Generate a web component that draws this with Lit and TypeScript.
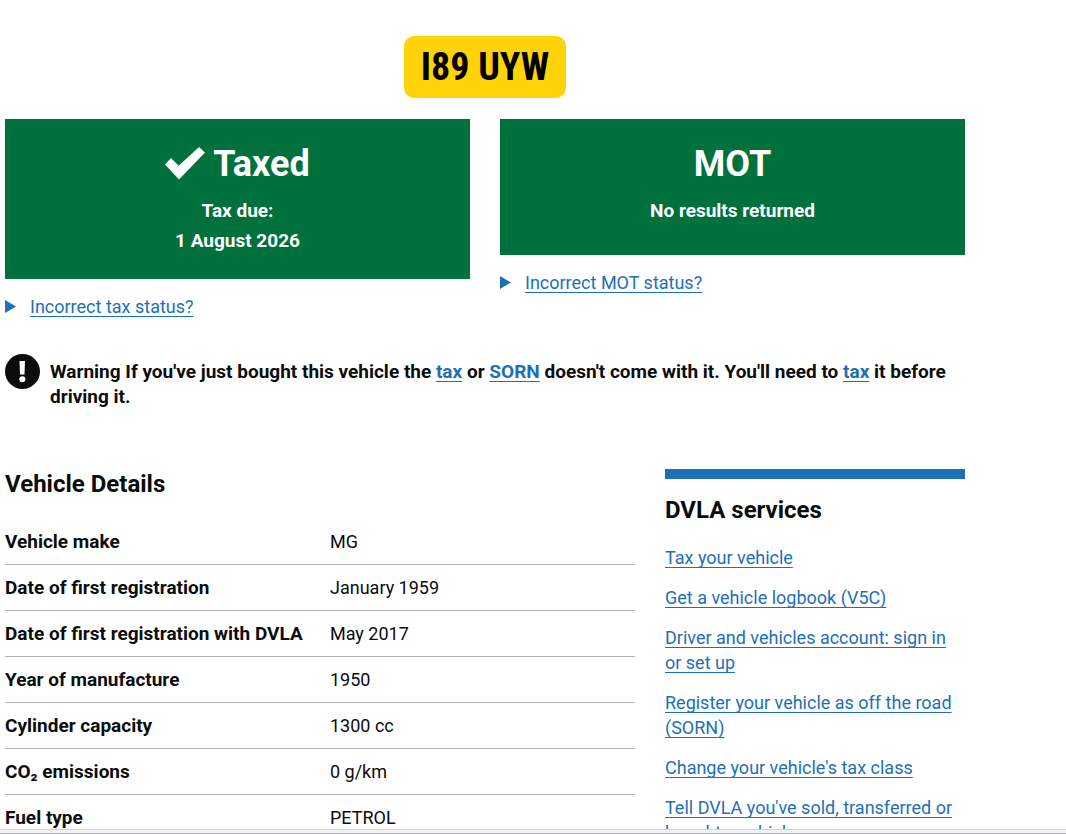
import { LitElement, html, css, svg } from "lit";
import { customElement } from "lit/decorators.js";

const VEHICLE: [string, string][] = [
  ["Vehicle make", "MG"],
  ["Date of first registration", "January 1959"],
  ["Date of first registration with DVLA", "May 2017"],
  ["Year of manufacture", "1950"],
  ["Cylinder capacity", "1300 cc"],
  ["CO₂ emissions", "0 g/km"],
  ["Fuel type", "PETROL"],
];

const SERVICES = [
  "Tax your vehicle",
  "Get a vehicle logbook (V5C)",
  "Driver and vehicles account: sign in or set up",
  "Register your vehicle as off the road (SORN)",
  "Change your vehicle's tax class",
  "Tell DVLA you've sold, transferred or bought a vehicle",
];

const tick = svg`<svg class="tick" viewBox="0 0 40 33" aria-hidden="true">
  <path fill="currentColor" d="M0 17.5 L6 11 L13.7 18.7 L34 0 L40 5.5 L14 32.5 Z"/>
</svg>`;

@customElement("app-root")
export class AppRoot extends LitElement {
  static styles = css`
    :host {
      display: flex;
      flex-direction: column;
      height: 100vh;
      overflow: hidden;
      background: #fff;
      color: #0b0c0c;
      font: 400 18px/25px Roboto, "Liberation Sans", sans-serif;
    }
    .page {
      flex: 1;
      min-height: 0;
      overflow: hidden;
    }
    .container {
      box-sizing: border-box;
      max-width: 970px;
      padding: 36px 5px 0;
    }
    a,
    .summary-text {
      color: #1d70b8;
      text-decoration: underline;
      text-decoration-thickness: 1px;
      text-underline-offset: 3px;
      text-decoration-skip-ink: none;
    }
    .plate {
      width: fit-content;
      margin: 0 auto 21px;
      padding: 6px 17px;
      border-radius: 10px;
      background: #ffd307;
      color: #000;
      font: 700 38px/50px "Roboto Condensed", Roboto, "Liberation Sans", sans-serif;
    }
    .statuses {
      display: grid;
      grid-template-columns: 1fr 1fr;
      gap: 30px;
      align-items: start;
      margin-bottom: 35px;
    }
    .panel {
      box-sizing: border-box;
      min-height: 136px;
      padding: 25px 20px 23px;
      background: #00703c;
      color: #fff;
      text-align: center;
      font-size: 19px;
      font-weight: 700;
      line-height: 30px;
    }
    .panel h2 {
      display: flex;
      justify-content: center;
      align-items: center;
      gap: 8px;
      margin: 0 0 12px;
      font-size: 36px;
      line-height: 40px;
    }
    .panel p {
      margin: 0;
    }
    .tick {
      width: 40px;
      height: 33px;
      margin-bottom: 2px;
    }
    details {
      margin-top: 15px;
    }
    summary {
      display: flex;
      align-items: center;
      gap: 14px;
      list-style: none;
      cursor: pointer;
    }
    .arrow {
      width: 11px;
      height: 13px;
      fill: #1d70b8;
    }
    .warning {
      display: flex;
      gap: 10px;
      align-items: flex-start;
      margin-bottom: 60px;
      font-size: 19px;
      font-weight: 700;
    }
    .warning p {
      margin: 5px 0 0;
    }
    .bang {
      flex: none;
      width: 35px;
      height: 35px;
    }
    .columns {
      display: grid;
      grid-template-columns: 1fr 300px;
      gap: 30px;
      align-items: start;
    }
    h3 {
      margin: 0 0 20px;
      font-size: 24px;
      line-height: 30px;
    }
    table {
      width: 100%;
      border-collapse: separate;
      border-spacing: 0;
    }
    th,
    td {
      padding: 10px 0;
      border-bottom: 1px solid #b1b4b6;
      text-align: left;
      vertical-align: top;
    }
    th {
      width: 325px;
      font-size: 19px;
      white-space: nowrap;
    }
    aside {
      padding-top: 16px;
      border-top: 10px solid #1d70b8;
    }
    ul {
      display: grid;
      gap: 15px;
      margin: 0;
      padding: 0;
      list-style: none;
    }
    .edge {
      flex: none;
      height: 3px;
      border-top: 1px solid #d4d4d4;
      border-bottom: 1px solid #b1b4b6;
      background: #f3f3f3;
    }
  `;

  private incorrect(label: string) {
    return html`<details>
      <summary>
        <svg class="arrow" viewBox="0 0 11 13" aria-hidden="true"><path d="M0 0 L11 6.5 L0 13 Z" /></svg>
        <span class="summary-text">${label}</span>
      </summary>
    </details>`;
  }

  render() {
    return html`
      <main class="page">
        <div class="container">
          <div class="plate">I89 UYW</div>
          <div class="statuses">
            <section>
              <div class="panel">
                <h2>${tick}<span>Taxed</span></h2>
                <p>Tax due:</p>
                <p>1 August 2026</p>
              </div>
              ${this.incorrect("Incorrect tax status?")}
            </section>
            <section>
              <div class="panel">
                <h2>MOT</h2>
                <p>No results returned</p>
              </div>
              ${this.incorrect("Incorrect MOT status?")}
            </section>
          </div>
          <div class="warning">
            <svg class="bang" viewBox="0 0 35 35" aria-hidden="true">
              <circle cx="17.5" cy="17.5" r="17.5" fill="#0b0c0c" />
              <path d="M14.5 7 H20 L19.5 20.5 H15 Z" fill="#fff" />
              <circle cx="17.3" cy="25.3" r="3" fill="#fff" />
            </svg>
            <p>
              Warning If you've just bought this vehicle the <a href="#">tax</a> or <a href="#">SORN</a> doesn't
              come with it. You'll need to <a href="#">tax</a> it before driving it.
            </p>
          </div>
          <div class="columns">
            <section>
              <h3>Vehicle Details</h3>
              <table>
                <tbody>
                  ${VEHICLE.map(([k, v]) => html`<tr><th scope="row">${k}</th><td>${v}</td></tr>`)}
                </tbody>
              </table>
            </section>
            <aside>
              <h3>DVLA services</h3>
              <ul>
                ${SERVICES.map((s) => html`<li><a href="#">${s}</a></li>`)}
              </ul>
            </aside>
          </div>
        </div>
      </main>
      <div class="edge"></div>
    `;
  }
}
